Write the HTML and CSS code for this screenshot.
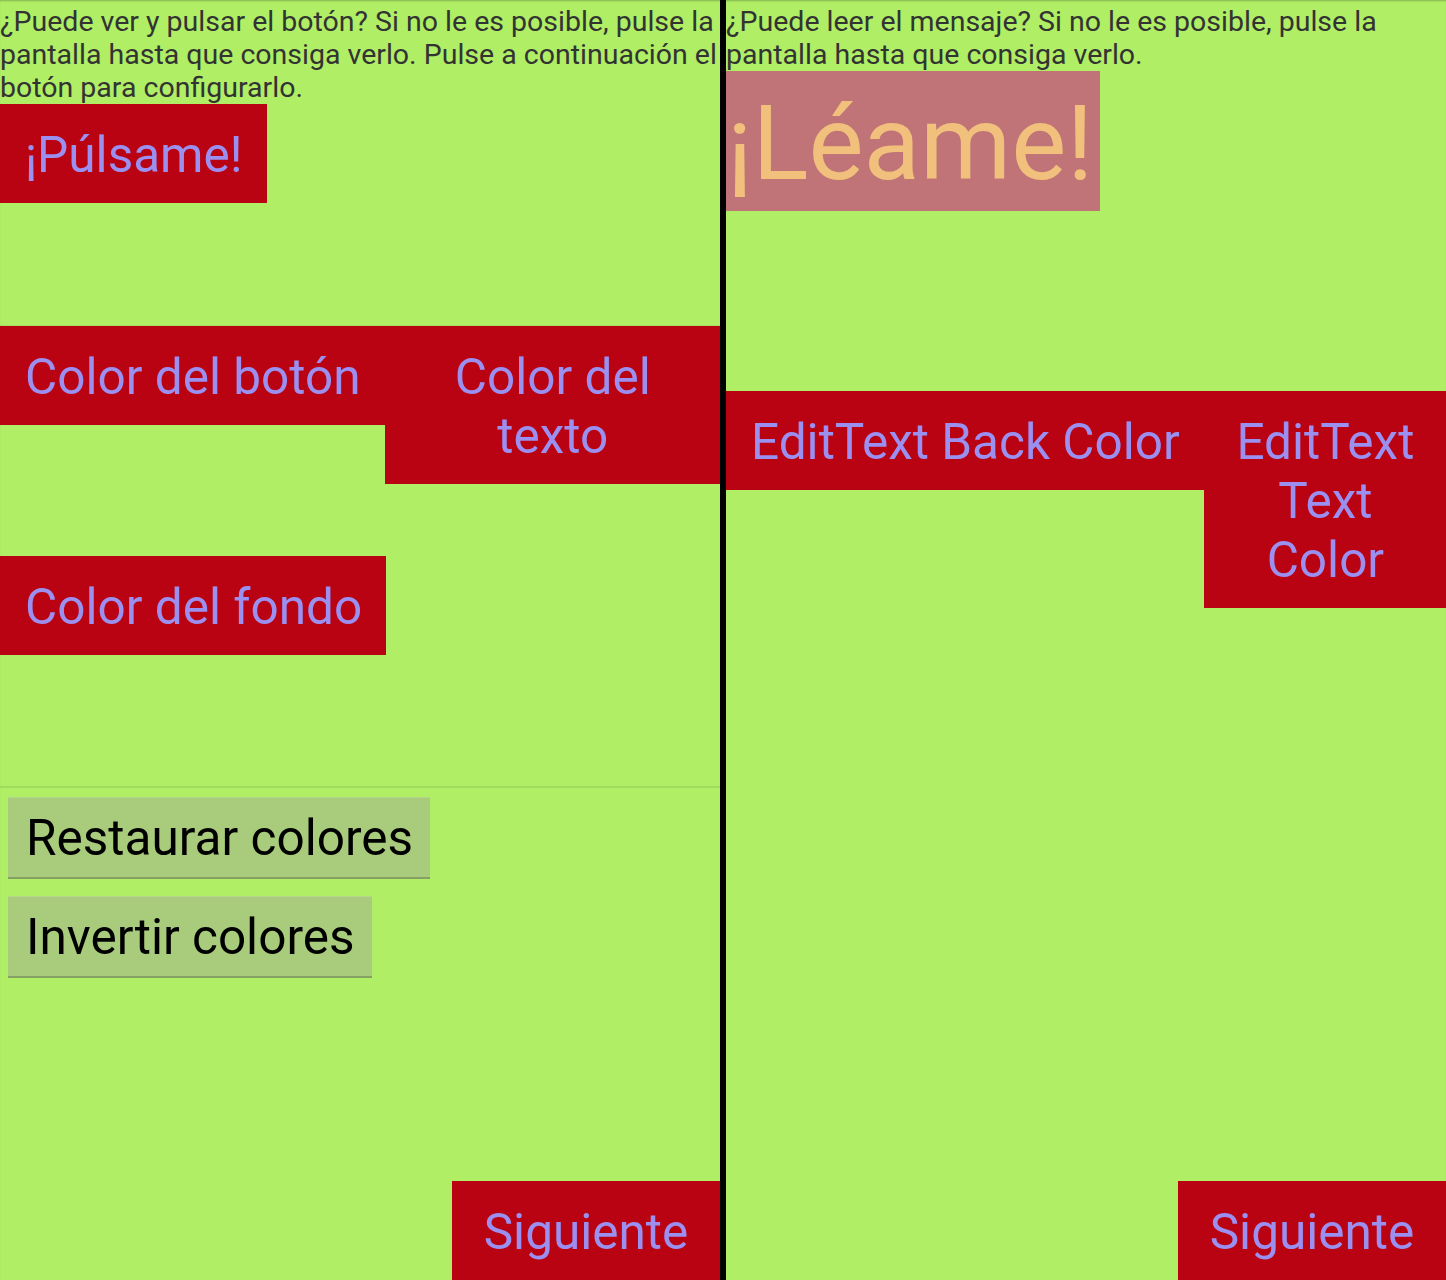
FILE: index.html
```html
<!DOCTYPE html>
<html lang="es">
<head>
<meta charset="utf-8">
<title>Colores</title>
<link rel="stylesheet" href="styles.css">
</head>
<body>
<div class="screen">
  <section class="panel">
    <p class="intro">¿Puede ver y pulsar el botón? Si no le es posible, pulse la pantalla hasta que consiga verlo. Pulse a continuación el botón para configurarlo.</p>
    <div class="red-btn pulsame">¡Púlsame!</div>
    <div class="row row-left">
      <div class="red-btn fit">Color del botón</div>
      <div class="red-btn grow">Color del texto</div>
    </div>
    <div class="red-btn fondo">Color del fondo</div>
    <hr class="divider">
    <div class="grey-btn restore">Restaurar colores</div>
    <div class="grey-btn invert">Invertir colores</div>
    <div class="red-btn next">Siguiente</div>
  </section>
  <div class="split"></div>
  <section class="panel">
    <p class="intro">¿Puede leer el mensaje? Si no le es posible, pulse la pantalla hasta que consiga verlo.</p>
    <div class="leame">¡Léame!</div>
    <div class="row row-right">
      <div class="red-btn fit">EditText Back Color</div>
      <div class="red-btn grow">EditText Text Color</div>
    </div>
    <div class="red-btn next">Siguiente</div>
  </section>
</div>
</body>
</html>
```
FILE: styles.css
```css
html, body {
  margin: 0;
  padding: 0;
}
body {
  background: #afee65;
  font-family: Roboto, "Noto Sans", sans-serif;
  width: 1446px;
  height: 1280px;
  overflow: hidden;
  box-shadow: inset 0 2px 2px -1px rgba(0, 0, 0, 0.25);
}
.screen {
  display: flex;
  height: 1280px;
}
.panel {
  width: 720px;
  display: flex;
  flex-direction: column;
  align-items: flex-start;
}
.split {
  width: 6px;
  background: #000;
  flex: none;
}
.intro {
  margin: 0;
  padding-top: 5px;
  font-size: 28.5px;
  line-height: 33px;
  color: #333333;
}
.red-btn {
  background: #b90313;
  color: #9b8ff0;
  font-size: 49.5px;
  line-height: 59px;
  padding: 22px 24px 18px 25px;
  text-align: center;
  white-space: normal;
}
.pulsame {
  margin-bottom: 123px;
}
.row {
  display: flex;
  align-items: flex-start;
  align-self: stretch;
}
.row-left {
  box-shadow: 0 -1px 0 rgba(0, 0, 0, 0.06);
}
.row .fit {
  flex: none;
  white-space: nowrap;
}
.row .grow {
  flex: 1;
  min-width: 0;
}
.fondo {
  margin-top: 72px;
}
.divider {
  align-self: stretch;
  margin: 131px 0 0 0;
  border: 0;
  height: 2px;
  background: #a0dc5c;
}
.grey-btn {
  margin-left: 8px;
  background: #a8cc7b;
  color: #000;
  font-size: 49.5px;
  line-height: 59px;
  padding: 11px 17px 11px 18px;
  border-top: 1px solid #b6d68e;
  border-bottom: 2px solid #84a063;
  box-sizing: border-box;
  height: 82px;
}
.restore {
  margin-top: 9px;
}
.invert {
  margin-top: 17px;
}
.next {
  margin-top: auto;
  align-self: flex-end;
  width: 268px;
  box-sizing: border-box;
  padding-left: 0;
  padding-right: 0;
}
.leame {
  background: #c07478;
  color: #f0c07c;
  font-size: 104px;
  line-height: 126px;
  padding: 10px 7px 4px 1px;
  margin-bottom: 180px;
}
```
